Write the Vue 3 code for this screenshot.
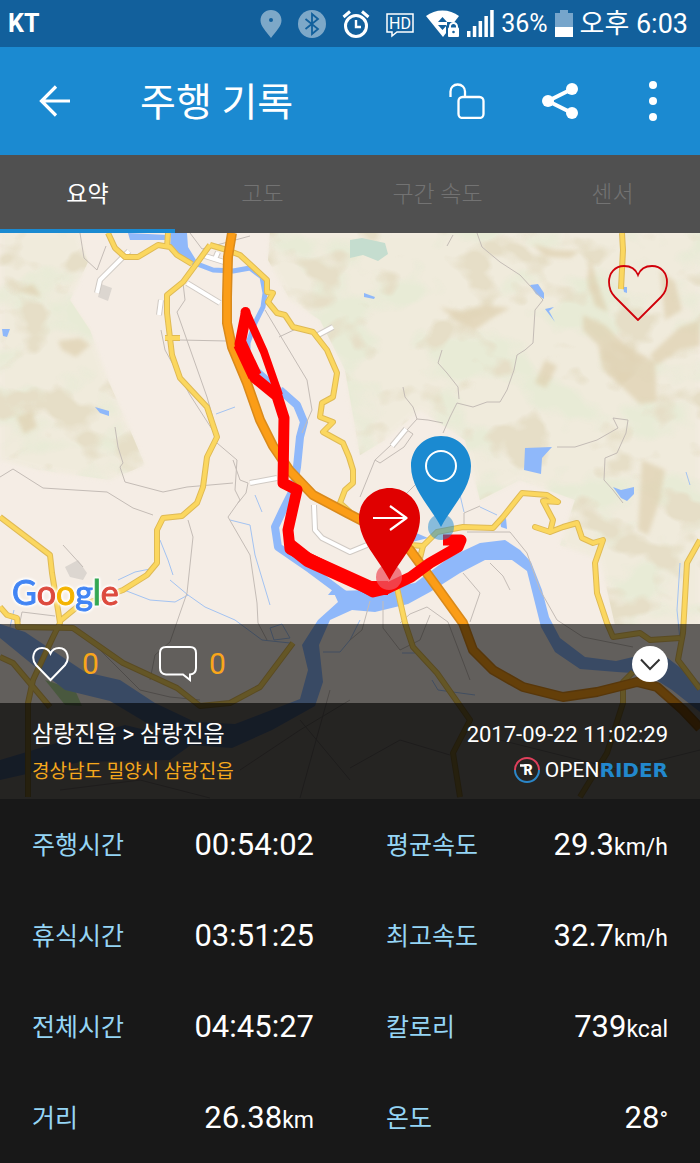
<template>
  <div class="screen">
    <div class="status-bar">
      <span class="carrier">KT</span>
      <div class="status-right">
        <div class="notices">
          <svg class="dim" width="22" height="28" viewBox="0 0 22 28">
            <path d="M11 0C5 0 .5 4.600 .5 10.400C.5 16 6 21 11 28C16 21 21.500 16 21.500 10.400C21.500 4.600 17 0 11 0Z" fill="#fff" />
            <circle cx="11" cy="10" r="2" fill="#12609c" />
          </svg>
          <svg class="dim" width="28" height="28" viewBox="0 0 28 28">
            <circle cx="14" cy="14" r="14" fill="#fff" />
            <path d="M7.500 9L20 19L14 24V4L20 9L7.500 19" fill="none" stroke="#12609c" stroke-width="1.800" />
          </svg>
          <svg width="28" height="28" viewBox="0 0 28 28" fill="none" stroke="#fff">
            <circle cx="14" cy="16" r="10.500" stroke-width="3" />
            <path d="M14 10V17H19" stroke-width="2.400" />
            <path d="M1.500 7L8 1.500M26.500 7L20 1.500" stroke-width="3" />
          </svg>
          <svg width="28" height="28" viewBox="0 0 28 28">
            <path d="M1 4H27V22H11L6 26V22H1Z" fill="none" stroke="#fff" stroke-width="1.500" />
            <text x="14" y="19" class="hd">HD</text>
          </svg>
        </div>
        <div class="system">
          <svg width="34" height="28" viewBox="0 0 34 28">
            <path d="M0 6C9-1.500 24-1.500 33 6L17 27Z" fill="#fff" />
            <path d="M12 12H21L16.500 7ZM12 15H21L16.500 20Z" fill="#12609c" />
            <path d="M20 28V16H21V12H32V16H34V28Z" fill="#12609c" />
            <rect x="22" y="17.500" width="11" height="9.500" rx="1" fill="#fff" />
            <path d="M24 18V16.500A3.500 3.500 0 0 1 31 16.500V18" fill="none" stroke="#fff" stroke-width="2" />
            <circle cx="27.500" cy="22" r="1.300" fill="#12609c" />
          </svg>
          <svg width="27" height="28" viewBox="0 0 27 28" fill="#fff">
            <path d="M0 21h3.500v6H0zM5.800 16h3.500v11H5.800zM11.600 11h3.500v16h-3.500zM17.400 6h3.500v21h-3.500zM23.200 0h3.500v27h-3.500z" />
          </svg>
          <span class="percent">36%</span>
          <svg width="18" height="28" viewBox="0 0 18 28">
            <path d="M0 3H5V0H13V3H18V17H0Z" fill="#76a5cb" />
            <path d="M0 17H18V27H0Z" fill="#fff" />
          </svg>
          <span class="clock">오후 6:03</span>
        </div>
      </div>
    </div>

    <header class="app-bar">
      <button type="button" aria-label="뒤로">
        <svg width="32" height="32" viewBox="0 0 32 32" fill="none" stroke="#fff" stroke-width="3.200">
          <path d="M17 1.500L2.500 16L17 30.500M2.500 16H31" />
        </svg>
      </button>
      <h1>주행 기록</h1>
      <div class="actions">
        <button type="button" aria-label="잠금 해제">
          <svg width="36" height="36" viewBox="0 0 36 36" fill="none" stroke="#fff" stroke-width="2.300">
            <rect x="9.500" y="14" width="25" height="21" rx="4" />
            <path d="M1.500 14V8.500C1.500 4.500 4.500 1.500 8.700 1.500C12.900 1.500 16 4.500 16 8.500V14" />
          </svg>
        </button>
        <button type="button" aria-label="공유">
          <svg width="36" height="36" viewBox="0 0 36 36" fill="#fff">
            <path d="M30 6L6 18L30 30" fill="none" stroke="#fff" stroke-width="4" />
            <circle cx="30" cy="6" r="6" />
            <circle cx="6" cy="18" r="6" />
            <circle cx="30" cy="30" r="6" />
          </svg>
        </button>
        <button type="button" aria-label="더보기">
          <svg width="36" height="42" viewBox="0 0 36 42" fill="#fff">
            <circle cx="18" cy="5" r="4" />
            <circle cx="18" cy="21" r="4" />
            <circle cx="18" cy="37" r="4" />
          </svg>
        </button>
      </div>
    </header>

    <nav class="tabs">
      <button
        v-for="tab in tabs"
        :key="tab"
        type="button"
        :class="{ active: tab === current }"
        @click="current = tab"
      >
        {{ tab }}
      </button>
    </nav>

    <section class="map">
      <svg class="map-canvas" viewBox="0 233 700 566" preserveAspectRatio="xMidYMid slice">
        <defs>
          <filter id="hills" x="0" y="0" width="100%" height="100%" color-interpolation-filters="sRGB">
            <feTurbulence type="fractalNoise" baseFrequency="0.016 0.021" numOctaves="3" seed="8" />
            <feColorMatrix values="0 0 0 0 0.91  0 0 0 0 0.92  0 0 0 0 0.84  6 0 0 0 -2.9" />
            <feComposite in2="SourceGraphic" operator="in" />
          </filter>
          <filter id="slopes" x="0" y="0" width="100%" height="100%" color-interpolation-filters="sRGB">
            <feTurbulence type="fractalNoise" baseFrequency="0.02 0.026" numOctaves="3" seed="21" />
            <feColorMatrix values="0 0 0 0 0.9  0 0 0 0 0.87  0 0 0 0 0.78  0 7 0 0 -3.8" />
            <feComposite in2="SourceGraphic" operator="in" />
          </filter>
          <filter id="soft" x="-10%" y="-10%" width="120%" height="120%">
            <feGaussianBlur stdDeviation="2" />
          </filter>
        </defs>
        <rect y="233" width="700" height="566" fill="#f5ede5" />
        <path :d="highland" fill="#f0ebdb" opacity=".8" filter="url(#soft)" />
        <path :d="highland" filter="url(#hills)" />
        <path :d="highland" filter="url(#slopes)" />
        <g fill="#dfd0b0" opacity=".7" filter="url(#soft)">
          <path v-for="d in peaks" :key="d" :d="d" />
        </g>
        <path d="M350 240L362 238L385 243L388 254L378 261L363 255L350 258Z" fill="#c5ddcf" />
        <path d="M65 567L78 560L87 573L83 580L70 577ZM101 284L112 288L108 301L98 297Z" fill="#dcd6d0" />
        <path d="M45 680L75 690L82 706L65 705Z" fill="#b7dc9b" />

        <g class="water">
          <path d="M171 233H187L188 247L196 260L190 265L170 249Z" />
          <path d="M128 233L168 235L167 240L130 240Z" />
          <path d="M525 448L552 447L542 458L541 474L524 470Z" />
          <path d="M613 487L621 490L634 487L634 494L627 501L621 498Z" />
          <path d="M530 285L538 284L544 293V299L536 294Z" />
          <path d="M545 309L554 307L549 311L555 322Z" />
          <path d="M95 407L109 411V416L100 413Z" />
          <path d="M2 329H10L7 337L3 336Z" />
          <path d="M364 293L375 297L374 299L364 297Z" />
          <path d="M623 287H627V293L624 292Z" />
          <path d="M333 589L328 595H336Z" />
          <path d="M500 520L506 518L507 529L501 527Z" />
          <path d="M414 532L428 538L412 542Z" />
          <path d="M333 591L372 590L415 583L450 557L480 543L505 540L520 550L531 562L542 590L549 617L560 638L585 657L616 661L633 657L660 652L678 666L700 683V712L672 690L647 674L617 672L580 669L555 652L541 627L533 595L527 571L512 560L485 560L460 573L430 592L408 604L375 612L352 610L330 620L319 645L323 682L315 706L272 730L232 748L190 745L145 722L110 701L65 690L33 665L0 638V624L25 632L55 652L85 672L120 680L155 703L195 722L235 724L300 699L308 670L302 645L318 620L338 602Z" />
          <path d="M0 760L60 742L125 725L195 742L170 760L80 762L0 780Z" />
        </g>
        <path
          class="river"
          d="M192 262L213 270L233 271L250 268L262 277L265 293L263 307L255 323L248 343L248 357L257 370L280 390"
        />
        <path class="river wide" d="M280 390L297 405L304 422L300 437L297 467L293 490L283 510L275 527L278 547L310 569L345 595" />
        <path
          v-for="d in streams"
          :key="d"
          class="stream"
          :d="d"
        />
        <path v-for="d in lanes" :key="d" class="lane" :d="d" />
        <g v-for="d in streets" :key="d">
          <path class="street-edge" :d="d" />
          <path class="street" :d="d" />
        </g>
        <path v-for="d in roads" :key="d" class="road-edge" :d="d" />
        <path v-for="d in roads" :key="d" class="road" :d="d" />
        <path class="motorway-edge" :d="motorway" />
        <path class="motorway" :d="motorway" />

        <path class="route" d="M246 314L240 344L255 378L277 396L284 418L283 483L297 490L288 530L290 549L350 579L373 592L386 589L411 577L430 563L458 547L461 540L443 540" />
        <path class="route thin" d="M246 312L264 352L279 395" />
        <path class="route thick" d="M240 344L255 376M289 545L308 560L370 588L388 588" />
        <circle cx="245.500" cy="312" r="5" fill="#f00" />

        <circle cx="441" cy="527" r="13" fill="#1b8ad1" opacity=".5" />
        <circle cx="389" cy="577" r="13" fill="#ee5560" opacity=".75" />
        <path d="M441 436C424 436 411 449 411 466C411 489 430 506 441 527C452 506 471 489 471 466C471 449 458 436 441 436Z" fill="#1b8ad1" />
        <circle cx="441" cy="466" r="15" fill="none" stroke="#fff" stroke-width="2" />
        <path d="M389.500 488C373 488 359 501 359 518C359 541 378 558 389.500 580C401 558 420 541 420 518C420 501 406 488 389.500 488Z" fill="#e00000" />
        <path d="M373 518H406M390 506L406.500 518L390 530" fill="none" stroke="#fff" stroke-width="2.200" />
      </svg>

      <div class="map-view">
        <button class="favorite" type="button" aria-label="즐겨찾기">
          <svg width="60" height="56" viewBox="0 0 60 56" fill="none" stroke="#d0000a" stroke-width="1.800">
            <path d="M30 55L7 32C2 27 1 22 1 17C1 8 7 1 16 1C23 1 28 5 30 10C32 5 37 1 44 1C53 1 59 8 59 17C59 22 57 28 53 32Z" />
          </svg>
        </button>
        <a class="google" href="#" aria-label="Google">
          <span class="g-blue">G</span><span class="g-red">o</span><span class="g-yellow">o</span><span class="g-blue">g</span><span class="g-green">l</span><span class="g-red">e</span>
        </a>
      </div>

      <div class="social">
        <button type="button" aria-label="좋아요">
          <svg width="38" height="36" viewBox="0 0 38 36" fill="none" stroke="#fff" stroke-width="2">
            <path d="M18.500 34L4 19C-1 13 1 2 10 2C14 2 17 4 18.500 7.500C20 4 23 2 27 2C36 2 38 13 33 19Z" />
          </svg>
          <span>0</span>
        </button>
        <button type="button" aria-label="댓글">
          <svg width="38" height="36" viewBox="0 0 38 36" fill="none" stroke="#fff" stroke-width="2">
            <path d="M7 1H31Q37 1 37 7V22Q37 28 31 28.500V34L24 28.500H7Q1 28 1 22V7Q1 1 7 1Z" />
          </svg>
          <span>0</span>
        </button>
        <button class="collapse" type="button" aria-label="접기">
          <svg width="36" height="36" viewBox="0 0 36 36">
            <circle cx="18" cy="18" r="18" fill="#fff" />
            <path d="M9 13.500L18 23L27.500 13.500" fill="none" stroke="#333" stroke-width="2" />
          </svg>
        </button>
      </div>

      <div class="summary">
        <div class="place">
          <p class="course">삼랑진읍 &gt; 삼랑진읍</p>
          <p class="region">경상남도 밀양시 삼랑진읍</p>
        </div>
        <div class="meta">
          <time datetime="2017-09-22T11:02:29">2017-09-22 11:02:29</time>
          <div class="brand">
            <svg width="28" height="28" viewBox="0 0 28 28" fill="none" stroke-width="2">
              <path d="M2 14A12 12 0 0 1 26 14" stroke="#e0405c" />
              <path d="M2 14A12 12 0 0 0 26 14" stroke="#2b86c8" />
              <path d="M7 9.500H12" stroke="#fff" stroke-width="2.500" />
              <text x="15" y="19" class="brand-mark">R</text>
            </svg>
            <span class="open">OPEN</span><span class="rider">RIDER</span>
          </div>
        </div>
      </div>
    </section>

    <dl class="stats">
      <div v-for="item in stats" :key="item.label" class="stat">
        <dt>{{ item.label }}</dt>
        <dd>{{ item.value }}<small>{{ item.unit }}</small></dd>
      </div>
    </dl>
  </div>
</template>

<script setup>
import { ref } from 'vue'

const tabs = ['요약', '고도', '구간 속도', '센서']
const current = ref('요약')

const stats = [
  { label: '주행시간', value: '00:54:02', unit: '' },
  { label: '평균속도', value: '29.3', unit: 'km/h' },
  { label: '휴식시간', value: '03:51:25', unit: '' },
  { label: '최고속도', value: '32.7', unit: 'km/h' },
  { label: '전체시간', value: '04:45:27', unit: '' },
  { label: '칼로리', value: '739', unit: 'kcal' },
  { label: '거리', value: '26.38', unit: 'km' },
  { label: '온도', value: '28', unit: '°' }
]

// map geometry
const highland =
  'M0 233H78L88 262L70 300L90 330L108 380L130 430L145 465L110 480L40 470L0 460Z' +
  'M270 233H700V625H615L600 560L560 545L575 500L520 480L480 500L465 440L420 410L385 440L360 455L345 370L320 320L290 300L268 260Z'

const peaks = [
  'M15 290L33 284L38 291L41 297L28 294Z',
  'M58 341L80 338L90 345L76 357L62 350Z',
  'M16 416L32 412L37 427L24 434Z',
  'M440 307L463 312L485 305L510 308L492 318L475 330L458 322Z',
  'M533 244L555 250L580 251L570 258L545 257Z',
  'M583 315L605 325L625 345L655 362L657 402L640 404L620 385L603 370L598 345L583 330Z',
  'M650 355L680 327L700 320V346L680 350L657 365Z',
  'M660 270L675 282L682 310L665 320Z',
  'M545 360L557 366L546 388L535 383Z',
  'M642 460L665 470L660 500L648 535L638 530Z',
  'M590 258L600 290L608 312L595 306L587 280Z'
]

const motorway =
  'M232 233L228 257L227 297L227 323L232 347L247 383L260 420L273 446L290 471L313 495L347 513L378 529L410 550L437 587L463 623L473 650L493 670L523 687L563 697L597 692L637 682L657 687L683 710L700 728'

const roads = [
  'M108 233L115 248L125 257L138 257L158 245L170 247L177 255L192 264',
  'M168 233L167 247',
  'M210 245L197 263L183 282L167 295L167 313L170 338L172 355L180 378L207 407L217 437L207 457L203 487L197 503L182 516L163 518L157 530L157 563L147 575L123 590L77 607L60 621',
  'M165 338L180 338',
  'M210 245L227 250L240 255L253 267L267 280L267 292L273 293L268 302L277 313L285 315L293 327L313 332L327 350L337 373L333 397L322 403L320 417L333 422L323 432L343 443L349 457L353 470L353 483L345 490L340 503L350 512',
  'M0 517L50 555L52 573L58 610L60 623L53 637L33 680L28 703V797',
  'M0 607L7 615L17 618L18 627L73 628L123 663L177 688L200 706L230 703L260 687L293 643',
  'M0 657L13 663L50 707',
  'M378 529L410 545L423 546L437 532L463 527L493 528L503 517L522 493L547 495L558 502L543 501L553 520L550 532L535 527L550 532L563 527L577 523L582 538L593 543L603 540L595 563L597 593L607 623L613 637L640 633L650 640L680 638',
  'M423 546L420 558',
  'M700 540L687 563L683 633L678 660L700 689',
  'M397 588L405 623L413 647L437 673L470 720L453 753L460 797',
  'M633 672L623 682L623 703L607 753L580 797',
  'M622 233L623 250L621 289'
]

const streets = [
  'M187 283L220 303',
  'M129 251L100 280L97 293',
  'M161 300L159 315',
  'M318 335L333 327',
  'M205 256L224 262M215 259L218 252',
  'M250 483L277 478',
  'M314 505L315 530L322 538L350 552L367 545',
  'M406 429L392 446'
]

const lanes = [
  'M477 233L482 247L500 262L520 275L543 300L535 310L533 343L525 350L517 355L514 370L507 390L500 402L487 402L473 407L457 403L450 417L443 433',
  'M453 235L447 246',
  'M442 350L438 363L447 373L458 387L459 399',
  'M403 387L405 397L413 407L417 419L428 420L443 423M417 419L407 430L375 460L360 497',
  'M407 430L413 434L404 447L380 463L375 460',
  'M557 447L575 447L597 440L618 428L613 418L628 420L626 433L617 453L605 458L604 480L613 490L623 503',
  'M0 477L13 469L43 488L107 492L133 508L153 515',
  'M115 427L118 447L123 463L120 467L125 482L163 492L187 487L233 483',
  'M188 520L193 537L187 593L170 642L155 655L150 680',
  'M217 443L237 460L235 490L240 500L228 517L250 555L257 603L258 623L267 640',
  'M233 460L240 480L248 483L246 493L238 503',
  'M183 283L185 300L177 312L207 397L213 418',
  'M161 330L165 350L190 395L217 437',
  'M180 340L227 341',
  'M265 310L307 380L312 410L302 433',
  'M80 233L84 258L97 270L106 246',
  'M190 233L202 249L250 236',
  'M279 337L298 328',
  'M467 532L510 532L527 553L540 590L557 620L583 637L633 647',
  'M490 563L503 576L510 590',
  'M463 573L480 593L470 622M400 623L410 614L427 607L448 622L470 680',
  'M370 601L362 630L350 640M383 601V628L400 650L420 640L430 615',
  'M464 528V513L480 506M400 500L410 490L420 480',
  'M73 628L100 650L140 690L170 697L200 700',
  'M63 545L83 567M20 622L22 612L55 616',
  'M350 768L400 740L450 755M240 770L300 730L350 700M60 790L140 780L210 798M300 720L350 780M330 690L300 798M500 740L620 770L700 750'
]

const streams = [
  'M160 540L168 560L173 575M118 580L135 572L155 568M124 590L150 600L175 602L188 595L205 607L235 620L262 640L290 643',
  'M188 595L170 580M255 495L262 512M230 520L250 525L255 555L270 605',
  'M680 563L677 610L680 640M686 472L690 485M460 495L464 512M480 507L497 515',
  'M323 652L340 652L350 640L360 620M402 653L415 653M432 680L438 690L475 695',
  'M14 610L10 627M216 414L235 407',
  'M270 628L282 624L290 638L274 640Z'
]
</script>

<style>
body {
  margin: 0;
  background: #181818;
}
</style>

<style scoped>
.screen {
  font-family: Roboto, "Noto Sans CJK KR", sans-serif;
  color: #fff;
  background: #181818;
}

button {
  display: flex;
  align-items: center;
  padding: 0;
  border: 0;
  background: none;
  color: inherit;
  font: inherit;
  cursor: pointer;
}

svg {
  display: block;
  flex: none;
}

.status-bar {
  display: flex;
  align-items: center;
  justify-content: space-between;
  height: 47px;
  padding: 0 12px 0 8px;
  background: #12609c;
}
.carrier {
  font-size: 25px;
  font-weight: bold;
}
.status-right,
.notices,
.system {
  display: flex;
  align-items: center;
}
.status-right {
  gap: 12px;
}
.notices {
  gap: 16px;
}
.system {
  gap: 7px;
}
.dim {
  opacity: 0.45;
}
.hd {
  fill: #fff;
  font-size: 16px;
  text-anchor: middle;
}
.percent {
  font-size: 25px;
}
.clock {
  font-size: 27px;
  line-height: 40px;
}

.app-bar {
  display: flex;
  align-items: center;
  height: 108px;
  padding: 0 29px 0 39px;
  background: #1b8ad1;
}
.app-bar h1 {
  margin: 0 0 0 69px;
  padding-top: 4px;
  font-size: 39px;
  font-weight: normal;
  line-height: 56px;
}
.actions {
  display: flex;
  align-items: center;
  gap: 57px;
  margin-left: auto;
}

.tabs {
  display: grid;
  grid-template-columns: repeat(4, 1fr);
  height: 78px;
  background: #505050;
}
.tabs button {
  justify-content: center;
  border-bottom: 4px solid transparent;
  color: #737373;
  font-size: 23px;
  font-weight: 300;
}
.tabs .active {
  border-bottom-color: #1b8ad1;
  color: #fff;
  font-weight: normal;
}

.map {
  position: relative;
}
.map-canvas {
  position: absolute;
  inset: 0;
  width: 100%;
  height: 100%;
}
.map-canvas path {
  stroke-linejoin: round;
}
.water {
  fill: #8fb8fa;
}
.river,
.stream,
.lane,
.street,
.street-edge,
.road,
.road-edge,
.motorway,
.motorway-edge,
.route {
  fill: none;
}
.river {
  stroke: #8fb8fa;
  stroke-width: 5;
}
.wide {
  stroke-width: 8;
}
.stream {
  stroke: #a3c3f2;
  stroke-width: 1;
}
.lane {
  stroke: #c4bcb6;
  stroke-width: 1;
}
.street-edge {
  stroke: #d0cac4;
  stroke-width: 6;
}
.street {
  stroke: #fff;
  stroke-width: 4;
}
.road-edge {
  stroke: #dfba55;
  stroke-width: 6;
}
.road {
  stroke: #fbd75f;
  stroke-width: 4;
}
.motorway-edge {
  stroke: #d98a1c;
  stroke-width: 10;
}
.motorway {
  stroke: #fb9d17;
  stroke-width: 7;
}
.route {
  stroke: #f00;
  stroke-width: 11;
}
.thin {
  stroke-width: 8;
}
.thick {
  stroke-width: 14;
}

.map-view {
  position: relative;
  display: flex;
  flex-direction: column;
  justify-content: space-between;
  box-sizing: border-box;
  min-height: 391px;
  padding: 32px 32px 12px 12px;
}
.favorite {
  align-self: flex-end;
}
.google {
  align-self: flex-start;
  font-family: Lato, sans-serif;
  font-size: 34px;
  line-height: 40px;
  text-decoration: none;
  -webkit-text-stroke: 1px;
  filter: drop-shadow(0 0 1px #fff) drop-shadow(0 0 1px #fff) drop-shadow(0 0 1px #fff);
}
.g-blue {
  color: #4285f4;
}
.g-red {
  color: #dd4b3e;
}
.g-yellow {
  color: #f4b400;
}
.g-green {
  color: #34a853;
}

.social {
  position: relative;
  display: flex;
  align-items: center;
  gap: 60px;
  height: 79px;
  padding: 0 32px;
  background: rgba(0, 0, 0, 0.6);
  color: #faa61a;
  font-size: 30px;
}
.social button {
  gap: 12px;
}
.social .collapse {
  margin-left: auto;
}

.summary {
  position: relative;
  display: flex;
  justify-content: space-between;
  box-sizing: border-box;
  min-height: 96px;
  padding: 13px 32px 9px;
  background: rgba(0, 0, 0, 0.85);
}
.summary p {
  margin: 0;
}
.course {
  font-size: 23px;
  line-height: 38px;
}
.region {
  color: #f5a81c;
  font-size: 19px;
  line-height: 36px;
}
.meta {
  display: flex;
  flex-direction: column;
  align-items: flex-end;
}
.meta time {
  font-size: 22px;
  line-height: 38px;
}
.brand {
  display: flex;
  align-items: center;
  line-height: 32px;
}
.brand-mark {
  fill: #fff;
  font-size: 14px;
  font-weight: 900;
  text-anchor: middle;
}
.open {
  margin-left: 4px;
  font-size: 21px;
}
.rider {
  color: #2288cd;
  font-family: "DejaVu Sans", sans-serif;
  font-size: 20px;
  font-weight: bold;
}

.stats {
  display: grid;
  grid-template-columns: 1fr 1fr;
  column-gap: 72px;
  margin: 0;
  padding: 0 32px;
}
.stat {
  display: flex;
  align-items: center;
  justify-content: space-between;
  height: 91px;
}
.stat dt {
  padding-bottom: 4px;
  color: #95d5f5;
  font-size: 25px;
}
.stat dd {
  margin: 0;
  font-size: 31px;
}
.stat small {
  font-size: 23px;
}
</style>
